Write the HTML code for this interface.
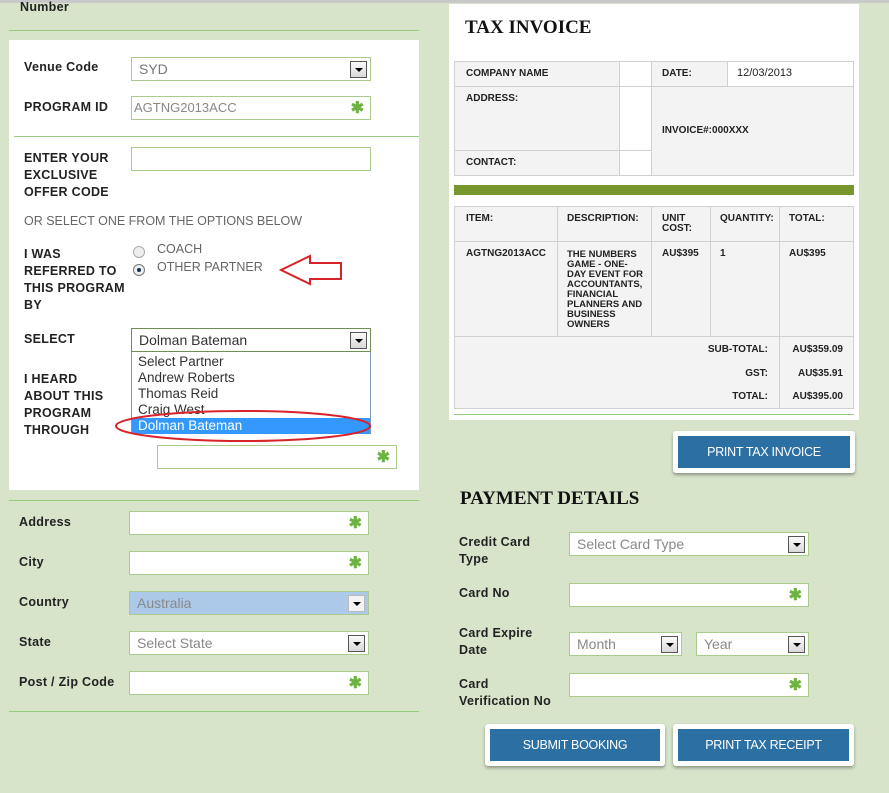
<!DOCTYPE html>
<html><head><meta charset="utf-8"><style>
*{margin:0;padding:0;box-sizing:border-box}
body{width:889px;height:793px;background:#d7e4ca;position:relative;overflow:hidden;font-family:"Liberation Sans",sans-serif;}
.a{position:absolute}
.lb{position:absolute;font-weight:bold;font-size:12.5px;color:#222;line-height:17px;letter-spacing:0.3px}
.in{position:absolute;background:#fff;border:1px solid #a9cc8c;height:24px;font-size:14px;color:#888;line-height:22px;padding-left:7px}
.st{position:absolute;right:6px;top:0;color:#6cb33f;font-size:16px;font-weight:bold;line-height:24px}
.dd{position:absolute;right:3px;top:3px;width:17px;height:17px;border:1px solid #555;background:linear-gradient(#fafafa,#d8d8d8)}
.dd:after{content:"";position:absolute;left:4px;top:6px;border-left:4px solid transparent;border-right:4px solid transparent;border-top:4px solid #000}
.hl{position:absolute;height:1px;background:#96cc7e}
.t{position:absolute;font-size:10px;font-weight:bold;color:#222;line-height:10px}
.cell{position:absolute;border:1px solid #d0d0d0;background:#f3f3f3}
.btn{position:absolute;background:#fff;border-radius:3px;box-shadow:0 2px 3px rgba(0,0,0,.35)}
.btn div{position:absolute;left:5px;top:5px;right:5px;bottom:5px;background:#2b6fa3;color:#fff;font-size:12.5px;text-align:center;line-height:32px;letter-spacing:-0.3px}
</style></head><body>
<div class="a" style="left:0;top:0;width:889px;height:3px;background:#c8c8c8"></div>
<div class="lb" style="left:20px;top:-1px">Number</div>
<div class="hl" style="left:9px;top:30px;width:410px"></div>
<div class="a" style="left:9px;top:40px;width:410px;height:450px;background:#fff"></div>
<div class="lb" style="left:24px;top:59px">Venue Code</div>
<div class="in" style="left:131px;top:57px;width:240px;color:#777">SYD<div class="dd"></div></div>
<div class="lb" style="left:24px;top:99px">PROGRAM ID</div>
<div class="in" style="left:131px;top:96px;width:240px;font-size:13px;padding-left:2px">AGTNG2013ACC<span class="st">✱</span></div>
<div class="hl" style="left:14px;top:136px;width:405px"></div>
<div class="lb" style="left:24px;top:150px">ENTER YOUR<br>EXCLUSIVE<br>OFFER CODE</div>
<div class="in" style="left:131px;top:147px;width:240px"></div>
<div class="a" style="left:24px;top:214px;font-size:12.5px;color:#666">OR SELECT ONE FROM THE OPTIONS BELOW</div>
<div class="lb" style="left:24px;top:246px">I WAS<br>REFERRED TO<br>THIS PROGRAM<br>BY</div>
<div class="a" style="left:133px;top:246px;width:12px;height:12px;border-radius:50%;border:1px solid #aaa;background:#eee"></div>
<div class="a" style="left:133px;top:264px;width:12px;height:12px;border-radius:50%;border:1px solid #777;background:#eee"><div class="a" style="left:3px;top:3px;width:4px;height:4px;border-radius:50%;background:#135"></div></div>
<div class="a" style="left:157px;top:242px;font-size:12.5px;color:#666">COACH</div>
<div class="a" style="left:157px;top:260px;font-size:12.5px;color:#666">OTHER PARTNER</div>
<svg class="a" style="left:0;top:0" width="889" height="793">
<path d="M281 270 L310 256 L310 263 L341 263 L341 279 L310 279 L310 284 Z" fill="none" stroke="#d9232a" stroke-width="2"/>
</svg>
<div class="lb" style="left:24px;top:331px">SELECT</div>
<div class="in" style="left:131px;top:328px;width:240px;border-color:#6f8f55;color:#333">Dolman Bateman<div class="dd"></div></div>
<div class="a" style="left:131px;top:352px;width:240px;height:82px;background:#fff;border:1px solid #7a9ab8;border-top:none;font-size:13.5px;color:#333;line-height:16px;padding-left:6px;padding-top:2px">Select Partner<br>Andrew Roberts<br>Thomas Reid<br>Craig West</div>
<div class="a" style="left:132px;top:418px;width:238px;height:16px;background:#3399ff;color:#fff;font-size:13.5px;line-height:16px;padding-left:6px">Dolman Bateman</div>
<div class="lb" style="left:24px;top:371px">I HEARD<br>ABOUT THIS<br>PROGRAM<br>THROUGH</div>
<svg class="a" style="left:0;top:0" width="889" height="793">
<ellipse cx="243" cy="426" rx="127" ry="15" fill="none" stroke="#d9232a" stroke-width="2"/>
</svg>
<div class="in" style="left:157px;top:445px;width:240px"><span class="st">✱</span></div>
<div class="hl" style="left:9px;top:500px;width:410px"></div>
<div class="lb" style="left:19px;top:514px">Address</div>
<div class="in" style="left:129px;top:511px;width:240px"><span class="st">✱</span></div>
<div class="lb" style="left:19px;top:554px">City</div>
<div class="in" style="left:129px;top:551px;width:240px"><span class="st">✱</span></div>
<div class="lb" style="left:19px;top:594px">Country</div>
<div class="in" style="left:129px;top:591px;width:240px;background:#adc9ea;color:#888">Australia<div class="dd" style="border-color:#bbb;background:#f3f3f3"></div></div>
<div class="lb" style="left:19px;top:634px">State</div>
<div class="in" style="left:129px;top:631px;width:240px">Select State<div class="dd"></div></div>
<div class="lb" style="left:19px;top:674px">Post / Zip Code</div>
<div class="in" style="left:129px;top:671px;width:240px"><span class="st">✱</span></div>
<div class="hl" style="left:9px;top:711px;width:410px"></div>
<div class="a" style="left:449px;top:4px;width:410px;height:416px;background:#fff"></div>
<div class="a" style="left:465px;top:17px;font-family:'Liberation Serif',serif;font-weight:bold;font-size:19px;color:#111">TAX INVOICE</div>
<div class="cell" style="left:454px;top:61px;width:166px;height:26px"></div>
<div class="cell" style="left:619px;top:61px;width:33px;height:26px;background:#fff"></div>
<div class="cell" style="left:651px;top:61px;width:77px;height:26px"></div>
<div class="cell" style="left:727px;top:61px;width:127px;height:26px;background:#fff"></div>
<div class="cell" style="left:454px;top:86px;width:166px;height:65px"></div>
<div class="cell" style="left:619px;top:86px;width:33px;height:65px;background:#fff"></div>
<div class="cell" style="left:454px;top:150px;width:166px;height:26px"></div>
<div class="cell" style="left:619px;top:150px;width:33px;height:26px;background:#fff"></div>
<div class="cell" style="left:651px;top:86px;width:203px;height:90px"></div>
<div class="t" style="left:466px;top:69px">COMPANY NAME</div>
<div class="t" style="left:662px;top:69px">DATE:</div>
<div class="t" style="left:737px;top:68px;font-weight:normal;font-size:11px">12/03/2013</div>
<div class="t" style="left:466px;top:94px">ADDRESS:</div>
<div class="t" style="left:662px;top:126px">INVOICE#:000XXX</div>
<div class="t" style="left:466px;top:158px">CONTACT:</div>
<div class="a" style="left:454px;top:185px;width:400px;height:10px;background:#77962c"></div>
<div class="cell" style="left:454px;top:206px;width:104px;height:36px"></div>
<div class="cell" style="left:557px;top:206px;width:95px;height:36px"></div>
<div class="cell" style="left:651px;top:206px;width:60px;height:36px"></div>
<div class="cell" style="left:710px;top:206px;width:70px;height:36px"></div>
<div class="cell" style="left:779px;top:206px;width:75px;height:36px"></div>
<div class="cell" style="left:454px;top:241px;width:104px;height:96px"></div>
<div class="cell" style="left:557px;top:241px;width:95px;height:96px"></div>
<div class="cell" style="left:651px;top:241px;width:60px;height:96px"></div>
<div class="cell" style="left:710px;top:241px;width:70px;height:96px"></div>
<div class="cell" style="left:779px;top:241px;width:75px;height:96px"></div>
<div class="cell" style="left:454px;top:336px;width:326px;height:73px"></div>
<div class="cell" style="left:779px;top:336px;width:75px;height:73px"></div>
<div class="t" style="left:466px;top:214px">ITEM:</div>
<div class="t" style="left:567px;top:214px">DESCRIPTION:</div>
<div class="t" style="left:662px;top:214px">UNIT<br>COST:</div>
<div class="t" style="left:720px;top:214px">QUANTITY:</div>
<div class="t" style="left:789px;top:214px">TOTAL:</div>
<div class="t" style="left:466px;top:249px">AGTNG2013ACC</div>
<div class="t" style="left:567px;top:250px;font-size:9.5px">THE NUMBERS<br>GAME - ONE-<br>DAY EVENT FOR<br>ACCOUNTANTS,<br>FINANCIAL<br>PLANNERS AND<br>BUSINESS<br>OWNERS</div>
<div class="t" style="left:662px;top:249px">AU$395</div>
<div class="t" style="left:720px;top:249px">1</div>
<div class="t" style="left:789px;top:249px">AU$395</div>
<div class="t" style="left:700px;top:345px;width:68px;text-align:right">SUB-TOTAL:</div>
<div class="t" style="left:700px;top:369px;width:68px;text-align:right">GST:</div>
<div class="t" style="left:700px;top:392px;width:68px;text-align:right">TOTAL:</div>
<div class="t" style="left:778px;top:345px;width:65px;text-align:right">AU$359.09</div>
<div class="t" style="left:778px;top:369px;width:65px;text-align:right">AU$35.91</div>
<div class="t" style="left:778px;top:392px;width:65px;text-align:right">AU$395.00</div>
<div class="hl" style="left:454px;top:414px;width:400px"></div>
<div class="btn" style="left:673px;top:431px;width:182px;height:42px"><div>PRINT TAX INVOICE</div></div>
<div class="a" style="left:460px;top:488px;font-family:'Liberation Serif',serif;font-weight:bold;font-size:19px;color:#111">PAYMENT DETAILS</div>
<div class="lb" style="left:459px;top:534px">Credit Card<br>Type</div>
<div class="in" style="left:569px;top:532px;width:240px">Select Card Type<div class="dd"></div></div>
<div class="lb" style="left:459px;top:585px">Card No</div>
<div class="in" style="left:569px;top:583px;width:240px"><span class="st">✱</span></div>
<div class="lb" style="left:459px;top:625px">Card Expire<br>Date</div>
<div class="in" style="left:569px;top:632px;width:113px">Month<div class="dd"></div></div>
<div class="in" style="left:696px;top:632px;width:113px">Year<div class="dd"></div></div>
<div class="lb" style="left:459px;top:676px">Card<br>Verification No</div>
<div class="in" style="left:569px;top:673px;width:240px"><span class="st">✱</span></div>
<div class="btn" style="left:485px;top:724px;width:180px;height:42px"><div>SUBMIT BOOKING</div></div>
<div class="btn" style="left:673px;top:724px;width:181px;height:42px"><div>PRINT TAX RECEIPT</div></div>
</body></html>
